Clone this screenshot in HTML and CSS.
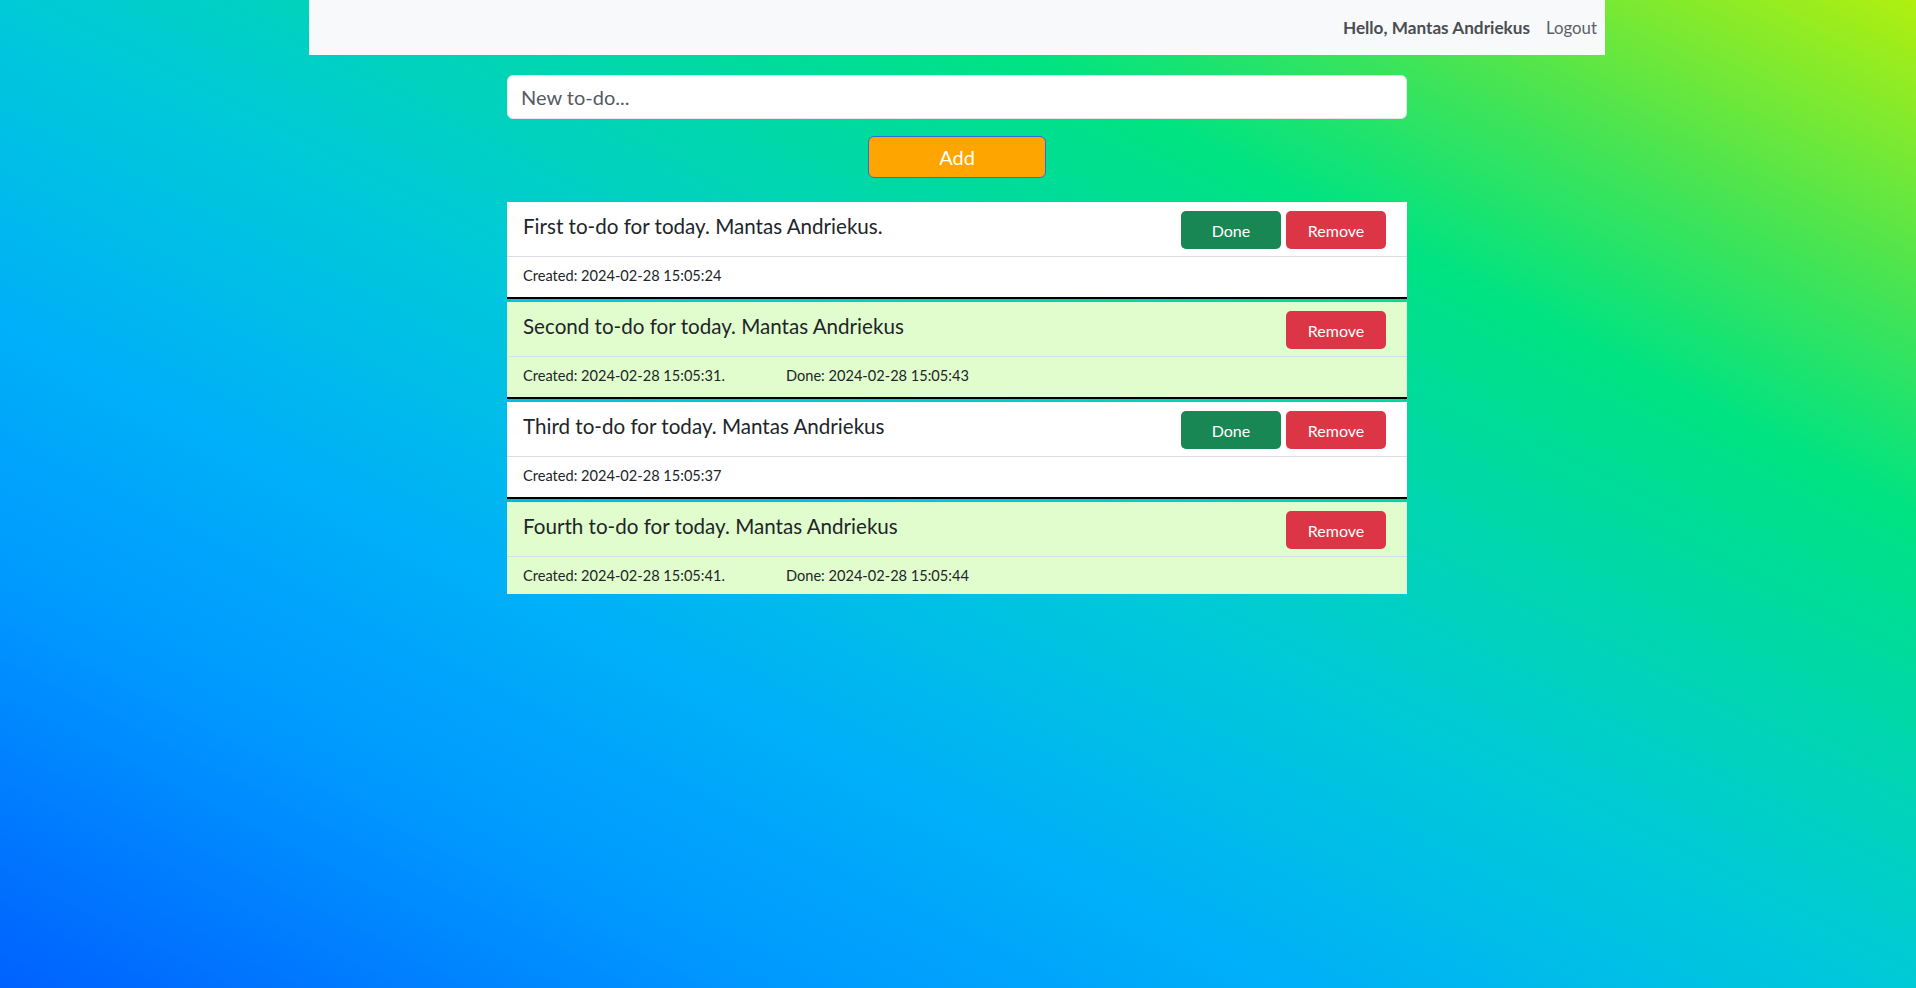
FILE: index.html
```html
<!DOCTYPE html>
<html lang="en">
<head>
<meta charset="utf-8">
<title>To-do</title>
<link rel="stylesheet" href="styles.css">
</head>
<body>
<div class="container">
  <nav class="navbar">
    <span class="hello">Hello, Mantas Andriekus</span>
    <a class="logout" href="#">Logout</a>
  </nav>
</div>
<main class="todo-col">
  <form class="add-form">
    <input class="todo-input" type="text" placeholder="New to-do...">
    <button class="btn-add" type="button">Add</button>
  </form>
  <ul class="todo-list">
    <li class="todo">
      <div class="todo-head">
        <span class="todo-title">First to-do for today. Mantas Andriekus.</span>
        <div class="todo-actions">
          <button class="btn btn-done" type="button">Done</button>
          <button class="btn btn-remove" type="button">Remove</button>
        </div>
      </div>
      <div class="todo-foot"><span class="created">Created: 2024-02-28 15:05:24</span></div>
    </li>
    <li class="todo is-done">
      <div class="todo-head">
        <span class="todo-title">Second to-do for today. Mantas Andriekus</span>
        <div class="todo-actions">
          <button class="btn btn-remove" type="button">Remove</button>
        </div>
      </div>
      <div class="todo-foot"><span class="created">Created: 2024-02-28 15:05:31.</span><span class="done-at">Done: 2024-02-28 15:05:43</span></div>
    </li>
    <li class="todo">
      <div class="todo-head">
        <span class="todo-title">Third to-do for today. Mantas Andriekus</span>
        <div class="todo-actions">
          <button class="btn btn-done" type="button">Done</button>
          <button class="btn btn-remove" type="button">Remove</button>
        </div>
      </div>
      <div class="todo-foot"><span class="created">Created: 2024-02-28 15:05:37</span></div>
    </li>
    <li class="todo is-done">
      <div class="todo-head">
        <span class="todo-title">Fourth to-do for today. Mantas Andriekus</span>
        <div class="todo-actions">
          <button class="btn btn-remove" type="button">Remove</button>
        </div>
      </div>
      <div class="todo-foot"><span class="created">Created: 2024-02-28 15:05:41.</span><span class="done-at">Done: 2024-02-28 15:05:44</span></div>
    </li>
  </ul>
</main>
</body>
</html>
```
FILE: styles.css
```css
* { box-sizing: border-box; }
html, body { margin: 0; padding: 0; }
body {
  min-height: 100vh;
  padding-right: 2px;
  font-family: Lato, "Liberation Sans", sans-serif;
  color: #212529;
  background: linear-gradient(to top right,
    #0061ff 0%, #0098ff 20%, #00b0f8 34%, #00cad8 50%,
    #00e382 74%, #48e452 85%, #b1ef0f 100%) fixed;
}
.container { width: 1296px; margin: 0 auto; }
.navbar {
  height: 55px;
  background: #f8f9fa;
  display: flex;
  align-items: center;
  justify-content: flex-end;
  gap: 16px;
  padding: 0 8px 1px 0;
}
.hello { font-size: 17.2px; font-weight: 700; color: #4a4d52; }
.logout { font-size: 16.8px; color: #5c6066; text-decoration: none; }
.todo-col { width: 900px; margin: 20px auto 0; }
.add-form { display: flex; flex-direction: column; align-items: center; gap: 17px; }
.todo-input {
  width: 100%;
  height: 44px;
  padding: 0 13px;
  border: 1px solid #e3e6ea;
  border-radius: 6px;
  background: #fff;
  font: 20px Lato, "Liberation Sans", sans-serif;
  color: #212529;
  outline: none;
}
.todo-input::placeholder { color: #555a60; }
.btn-add {
  width: 178px;
  height: 42px;
  background: #ffa500;
  border: 1px solid #2d6fd8;
  border-radius: 6px;
  color: #fff;
  font: 20px Lato, "Liberation Sans", sans-serif;
}
.todo-list { list-style: none; margin: 24px 0 0; padding: 0; }
.todo { background: #fff; }
.todo.is-done { background: #e1fdcd; }
.todo:not(:last-child) { border-bottom: 2px solid #000; margin-bottom: 3px; padding-bottom: 3px; }
.todo-head {
  display: flex;
  justify-content: space-between;
  align-items: flex-start;
  padding: 9px 21px 7px 16px;
  border-bottom: 1px solid #dcdde2;
}
.todo-title { font-size: 20.6px; line-height: 30px; }
.todo-actions { display: flex; gap: 5px; }
.btn {
  width: 100px;
  height: 38px;
  border: 0;
  border-radius: 5px;
  color: #fff;
  font: 16px Lato, "Liberation Sans", sans-serif;
}
.btn-done { background: #198754; }
.btn-remove { background: #dc3545; }
.todo-foot { padding: 8px 16px; font-size: 14.6px; line-height: 21px; }
.created { display: inline-block; width: 263px; }
```
